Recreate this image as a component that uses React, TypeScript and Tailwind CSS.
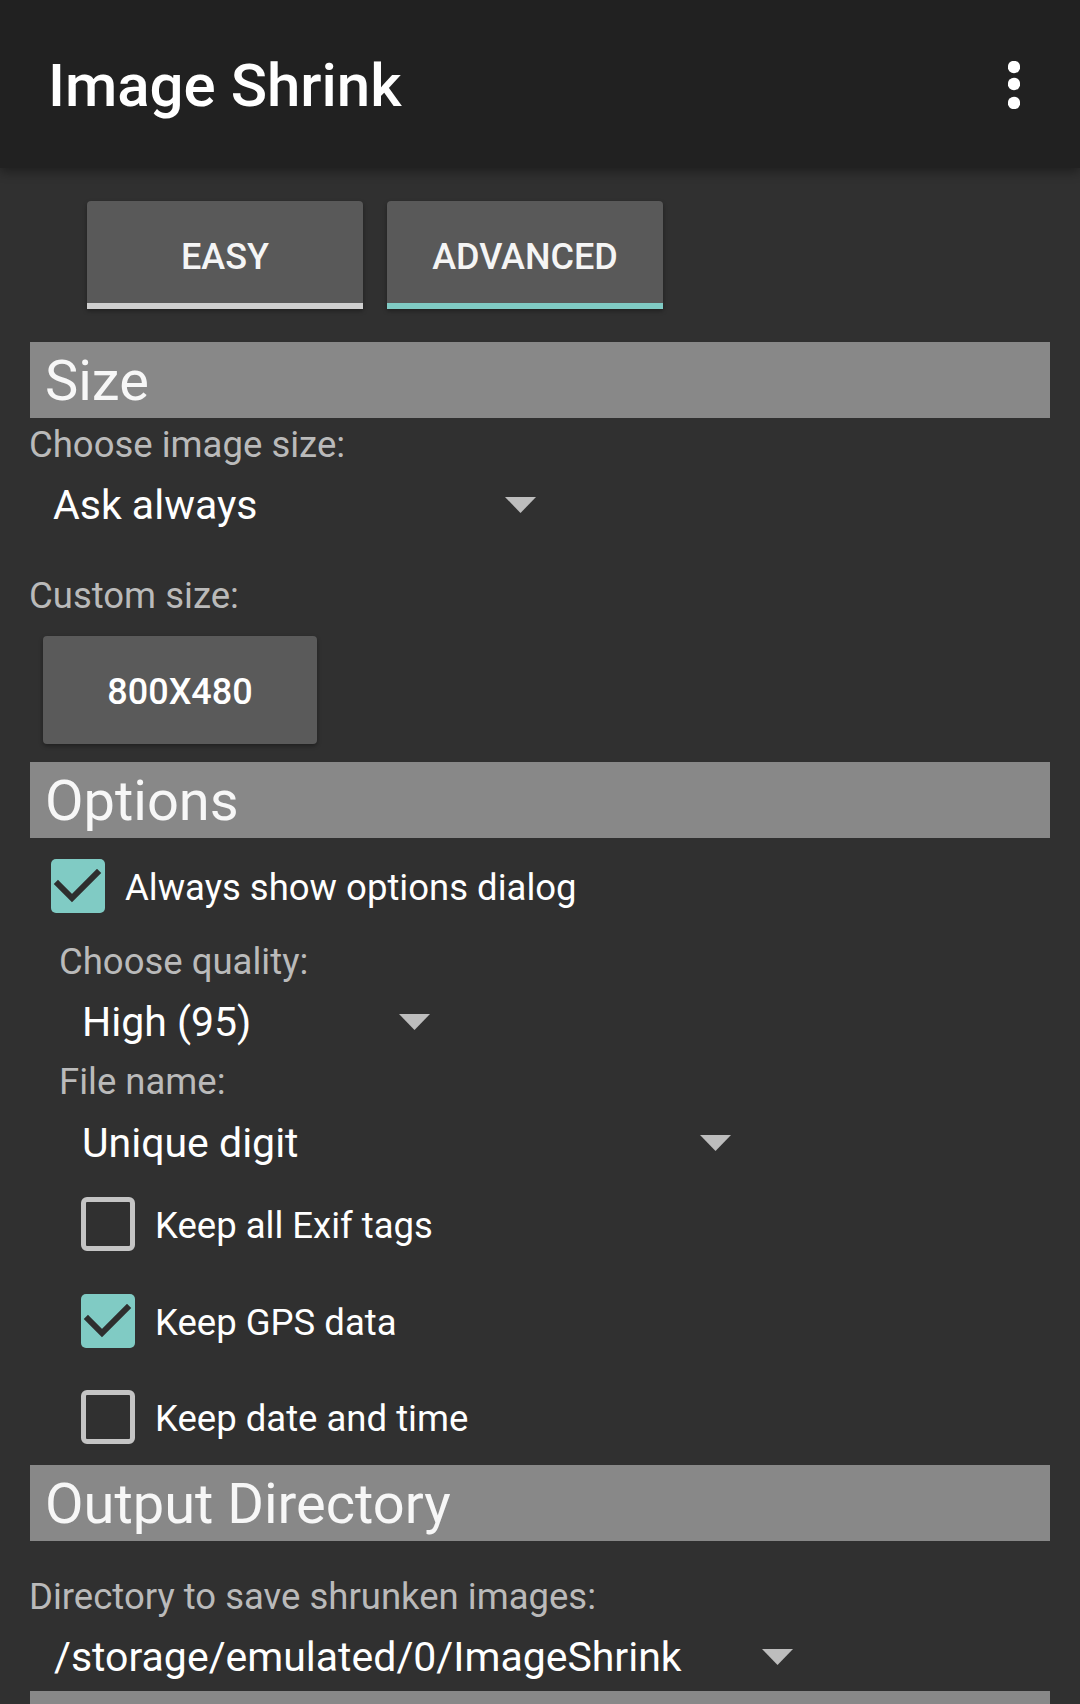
import React from "react";

function Arrow() {
  return (
    <svg width="31" height="16" viewBox="0 0 31 16" className="shrink-0">
      <polygon points="0,0 31,0 15.5,16" fill="#bdbdbd" />
    </svg>
  );
}

function Header({ title }: { title: string }) {
  return (
    <div className="mx-[30px] h-[76px] bg-[#888888] pl-[15px] text-[56px] leading-[79px] text-[#f7f7f7] overflow-hidden">
      {title}
    </div>
  );
}

function Label({ text, className }: { text: string; className: string }) {
  return <div className={"text-[36.5px] leading-[36px] text-[#bababa] " + className}>{text}</div>;
}

function Spinner({ value, className }: { value: string; className: string }) {
  return (
    <div className={"flex items-center justify-between h-[42px] " + className}>
      <span className="text-[41px] leading-[42px] text-white whitespace-nowrap">{value}</span>
      <Arrow />
    </div>
  );
}

function Check({ label, checked, className }: { label: string; checked: boolean; className: string }) {
  return (
    <div className={"flex items-center gap-[20px] h-[54px] " + className}>
      {checked ? (
        <div className="w-[54px] h-[54px] rounded-[5px] bg-[#80cbc4] shrink-0">
          <svg width="54" height="54" viewBox="0 0 54 54">
            <polyline points="7,25 21,39 46,14" fill="none" stroke="#2e2e2e" strokeWidth="6" strokeLinecap="square" />
          </svg>
        </div>
      ) : (
        <div className="w-[54px] h-[54px] rounded-[6px] border-[5px] border-[#c4c4c4] shrink-0" />
      )}
      <span className="mt-[4px] text-[36.5px] leading-[36px] text-white whitespace-nowrap">{label}</span>
    </div>
  );
}

export default function App() {
  const tabs = [
    { name: "EASY", bar: "bg-[#cfcfcf]" },
    { name: "ADVANCED", bar: "bg-[#80cbc4]" },
  ];

  return (
    <div className="w-[1080px] h-[1704px] bg-[#303030] overflow-hidden [font-family:Roboto,'Noto_Sans',sans-serif]">
      {/* toolbar */}
      <div className="relative z-10 h-[168px] bg-[#212121] flex items-center justify-between pl-[48px] pr-[60px] shadow-[0_4px_10px_rgba(0,0,0,0.35)]">
        <div className="text-[60px] leading-[60px] font-medium text-white mt-[4px]">Image Shrink</div>
        <svg width="12" height="48" viewBox="0 0 12 48" className="mt-[2px]">
          <circle cx="6" cy="6" r="6.2" fill="#fff" />
          <circle cx="6" cy="23" r="6.2" fill="#fff" />
          <circle cx="6" cy="42" r="6.2" fill="#fff" />
        </svg>
      </div>

      {/* tabs */}
      <div className="mt-[33px] ml-[87px] flex gap-[24px]">
        {tabs.map((t) => (
          <div
            key={t.name}
            className="w-[276px] h-[108px] flex flex-col bg-[#595959] rounded-t-[4px] shadow-[0_2px_4px_rgba(0,0,0,0.35)]"
          >
            <div className="flex-1 flex items-center justify-center pt-[9px] text-[36px] leading-[36px] font-medium text-[#f5f5f5]">
              {t.name}
            </div>
            <div className={"h-[6px] " + t.bar} />
          </div>
        ))}
      </div>

      {/* size */}
      <div className="mt-[33px]">
        <Header title="Size" />
      </div>
      <Label text="Choose image size:" className="mt-[9px] ml-[29px]" />
      <Spinner value="Ask always" className="mt-[21px] ml-[53px] w-[483px]" />
      <Label text="Custom size:" className="mt-[52px] ml-[29px]" />
      <div className="mt-[22px] ml-[43px] w-[274px] h-[108px] rounded-[4px] bg-[#5a5a5a] shadow-[0_2px_4px_rgba(0,0,0,0.35)] flex items-center justify-center pt-[4px] text-[36px] leading-[36px] font-medium text-white">
        800X480
      </div>

      {/* options */}
      <div className="mt-[18px]">
        <Header title="Options" />
      </div>
      <Check label="Always show options dialog" checked={true} className="mt-[21px] ml-[51px]" />
      <Label text="Choose quality:" className="mt-[31px] ml-[59px]" />
      <Spinner value="High (95)" className="mt-[21px] ml-[82px] w-[348px]" />
      <Label text="File name:" className="mt-[21px] ml-[59px]" />
      <Spinner value="Unique digit" className="mt-[22px] ml-[82px] w-[649px]" />
      <Check label="Keep all Exif tags" checked={false} className="mt-[33px] ml-[81px]" />
      <Check label="Keep GPS data" checked={true} className="mt-[43px] ml-[81px]" />
      <Check label="Keep date and time" checked={false} className="mt-[42px] ml-[81px]" />

      {/* output directory */}
      <div className="mt-[21px]">
        <Header title="Output Directory" />
      </div>
      <Label text="Directory to save shrunken images:" className="mt-[38px] ml-[29px]" />
      <Spinner value="/storage/emulated/0/ImageShrink" className="mt-[21px] ml-[54px] w-[739px]" />
      <div className="mt-[13px] mx-[30px] h-[60px] bg-[#888888]" />
    </div>
  );
}
